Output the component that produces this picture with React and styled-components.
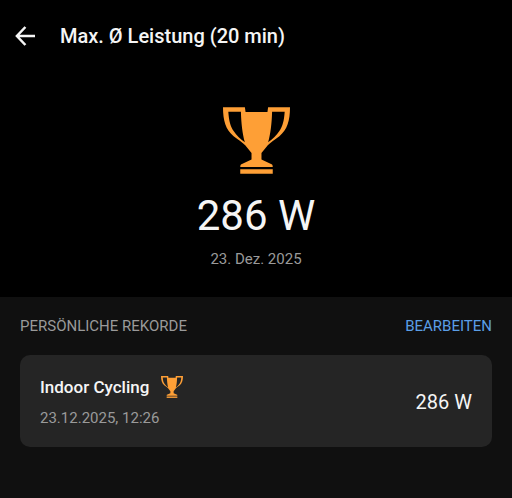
import React from "react";
import styled, { createGlobalStyle } from "styled-components";

const GlobalStyle = createGlobalStyle`
    * {
        box-sizing: border-box;
    }
    body {
        margin: 0;
        background-color: #101010;
        color: #f5f5f5;
        font-family: Roboto, "Liberation Sans", sans-serif;
    }
    h1, h2, h3, p, ul {
        margin: 0;
        padding: 0;
    }
`;

const Top = styled.div`
    padding-bottom: 28px;
    background-color: #000;
`;
const Header = styled.header`
    display: flex;
    align-items: center;
    height: 72px;
    padding: 0 15px;
`;
const BackButton = styled.button`
    display: flex;
    margin-right: 25px;
    padding: 0;
    border: none;
    background: none;
    color: #f5f5f5;
    cursor: pointer;
`;
const Title = styled.h1`
    font-size: 20px;
    line-height: 24px;
    font-weight: 500;
`;
const Hero = styled.section`
    display: flex;
    flex-direction: column;
    align-items: center;
    padding-top: 35px;
`;
const TrophySvg = styled.svg`
    flex: none;
    width: ${props => props.$size}px;
    height: ${props => props.$size}px;
    fill: #fe9f36;
`;
const HeroValue = styled.p`
    margin-top: 18px;
    font-size: 42px;
    line-height: 48px;
`;
const HeroDate = styled.p`
    margin-top: 9px;
    color: #9a9a9a;
    font-size: 15px;
    line-height: 20px;
`;
const Records = styled.section`
    padding: 19px 20px 50px;
`;
const RecordsHeader = styled.div`
    display: flex;
    align-items: center;
    justify-content: space-between;
    margin-bottom: 19px;
`;
const RecordsTitle = styled.h2`
    color: #9a9a9a;
    font-size: 15px;
    line-height: 20px;
    font-weight: 400;
`;
const EditButton = styled.button`
    padding: 0;
    border: none;
    background: none;
    color: #5b9ee6;
    font-family: inherit;
    font-size: 15px;
    line-height: 20px;
    cursor: pointer;
`;
const List = styled.ul`
    list-style: none;
`;
const Record = styled.li`
    display: flex;
    align-items: center;
    justify-content: space-between;
    padding: 20px 20px 19px;
    border-radius: 10px;
    background-color: #252525;
`;
const RecordName = styled.div`
    display: flex;
    align-items: center;
    gap: 12px;
    margin-bottom: 9px;
`;
const Name = styled.h3`
    font-size: 17px;
    line-height: 24px;
    font-weight: 500;
`;
const RecordDate = styled.p`
    color: #9a9a9a;
    font-size: 15px;
    line-height: 20px;
`;
const RecordValue = styled.span`
    font-size: 20px;
    line-height: 24px;
`;

const records = [
    { name: "Indoor Cycling", date: "23.12.2025, 12:26", value: "286 W" }
];

const Trophy = ({ size }) => (
    <TrophySvg $size={size} viewBox="0 0 202 202" aria-hidden="true">
        <path
            fillRule="evenodd"
            d="M0 1H66L68 15H134L136 1H202C202 42 194 68 170 88C156 99 143 107 135 115L116 139V158L148 173Q150 175 150 181H52Q52 175 54 173L86 158V139L67 115C59 107 46 99 32 88C8 68 0 42 0 1ZM16 14C18 42 22 58 32 72C40 84 52 96 66 106C59 82 55 50 54 14ZM186 14C184 42 180 58 170 72C162 84 150 96 136 106C143 82 147 50 148 14Z"
        />
        <path d="M52 188H150V201H52Z" />
    </TrophySvg>
);

const App = () => (
    <>
        <GlobalStyle />
        <main>
            <Top>
                <Header>
                    <BackButton type="button" aria-label="Zurück">
                        <svg width="20" height="20" viewBox="0 0 20 20" fill="none" stroke="currentColor" strokeWidth="2.5">
                            <path d="M10.4 1L1.9 10L10.4 19M2 10H20" />
                        </svg>
                    </BackButton>
                    <Title>Max. Ø Leistung (20 min)</Title>
                </Header>
                <Hero>
                    <Trophy size={67} />
                    <HeroValue>286 W</HeroValue>
                    <HeroDate>23. Dez. 2025</HeroDate>
                </Hero>
            </Top>
            <Records>
                <RecordsHeader>
                    <RecordsTitle>PERSÖNLICHE REKORDE</RecordsTitle>
                    <EditButton type="button">BEARBEITEN</EditButton>
                </RecordsHeader>
                <List>
                    {records.map((record, index) => (
                        <Record key={index}>
                            <div>
                                <RecordName>
                                    <Name>{record.name}</Name>
                                    <Trophy size={22} />
                                </RecordName>
                                <RecordDate>{record.date}</RecordDate>
                            </div>
                            <RecordValue>{record.value}</RecordValue>
                        </Record>
                    ))}
                </List>
            </Records>
        </main>
    </>
);

export default App;
